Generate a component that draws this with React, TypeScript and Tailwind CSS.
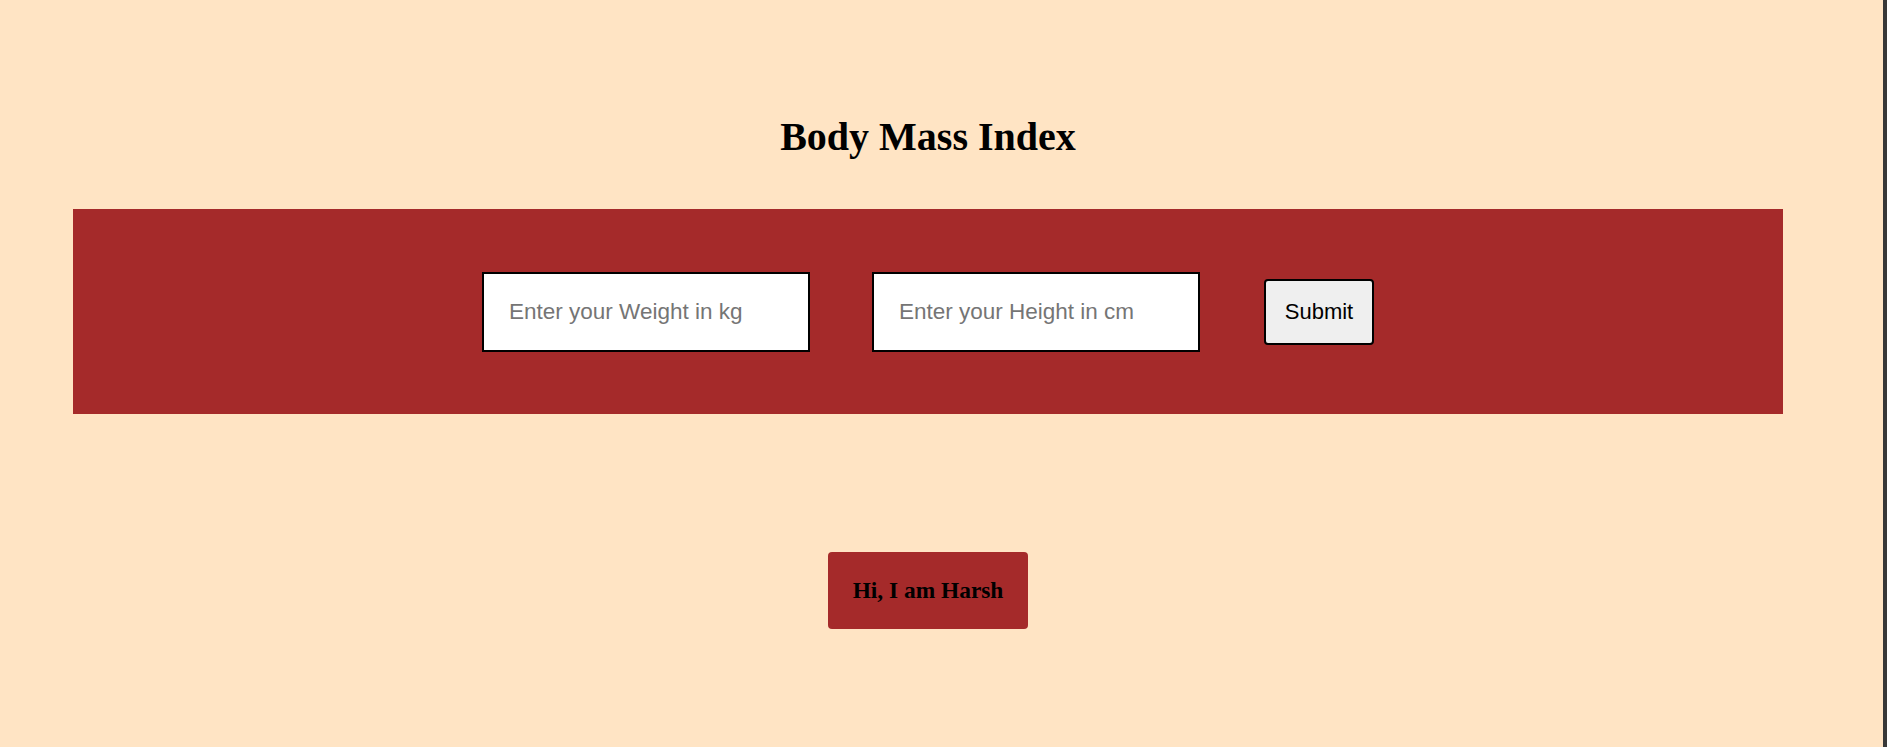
import React, { useState } from 'react';

export default function App() {
  const [weight, setWeight] = useState('');
  const [height, setHeight] = useState('');

  const handleSubmit = (e: React.FormEvent) => {
    e.preventDefault();
  };

  return (
    <div className="flex min-h-[747px] w-full bg-[#ffe4c4]">
      <div className="w-[1856px] shrink-0">
        <h1 className="pt-[114px] text-center font-['Liberation_Serif','Times_New_Roman',serif] text-[40px] font-bold leading-[46px] text-black">
          Body Mass Index
        </h1>

        <form
          onSubmit={handleSubmit}
          className="mx-[73px] mt-[49px] flex h-[205px] items-center justify-center bg-[#a52a2a] font-['Liberation_Sans',Arial,sans-serif]"
        >
          <input
            type="text"
            placeholder="Enter your Weight in kg"
            value={weight}
            onChange={(e) => setWeight(e.target.value)}
            className="h-[80px] w-[328px] border-2 border-black bg-white pl-[25px] text-[22.5px] text-black outline-none placeholder:text-[#757575]"
          />
          <input
            type="text"
            placeholder="Enter your Height in cm"
            value={height}
            onChange={(e) => setHeight(e.target.value)}
            className="ml-[62px] h-[80px] w-[328px] border-2 border-black bg-white pl-[25px] text-[22.5px] text-black outline-none placeholder:text-[#757575]"
          />
          <button
            type="submit"
            className="ml-[64px] h-[66px] w-[110px] rounded-[4px] border-2 border-black bg-[#efefef] text-[22px] text-black"
          >
            Submit
          </button>
        </form>

        <div className="mx-auto mt-[138px] flex h-[77px] w-[200px] items-center justify-center rounded-[4px] bg-[#a52a2a]">
          <h4 className="font-['Liberation_Serif','Times_New_Roman',serif] text-[23.4px] font-bold text-black">
            Hi, I am Harsh
          </h4>
        </div>
      </div>
      <div className="flex-1" />
      <div className="w-[4px] shrink-0 bg-[#383838]" />
    </div>
  );
}
